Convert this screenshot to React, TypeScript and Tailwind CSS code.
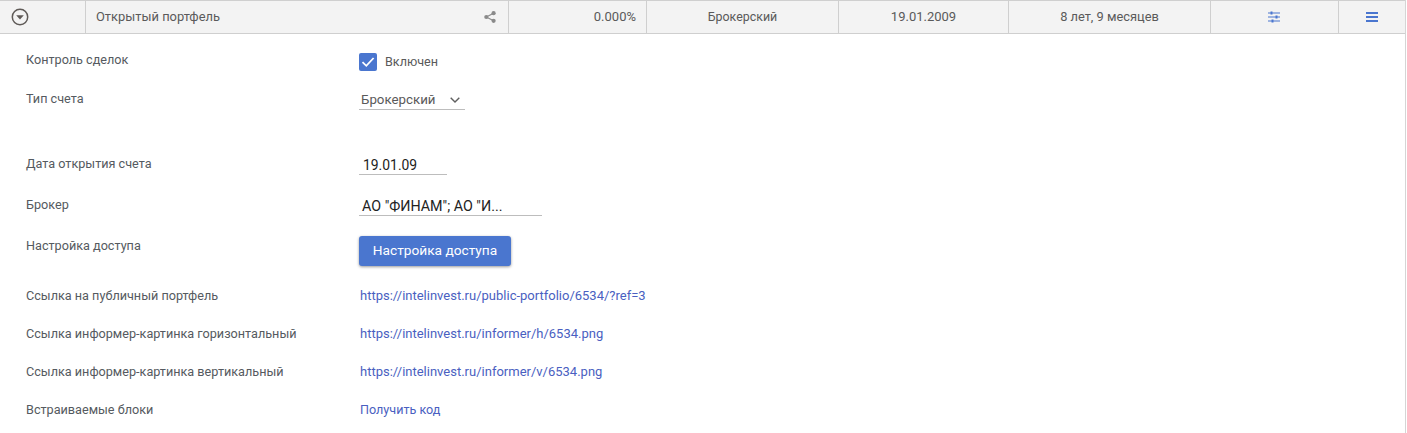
import React from "react";

const cellBase = "flex h-full items-center border-r border-[#cfcfcf] text-[13px] text-[#5a5a5a]";

const Row = ({ label, height, children }: { label: string; height: string; children: React.ReactNode }) => (
  <div className={`flex ${height}`}>
    <div className="w-[333px] pt-[1px] text-[12.65px] leading-[16px] text-[#555a60]">{label}</div>
    <div className="flex-1">{children}</div>
  </div>
);

const LinkText = ({ children, small }: { children: React.ReactNode; small?: boolean }) => (
  <a className={`block pl-[1px] pt-[1px] leading-[16px] text-[#4a5fc1] ${small ? "text-[12.6px]" : "text-[13px]"}`}>{children}</a>
);

export default function App() {
  return (
    <div className="h-[433px] w-[1407px] overflow-hidden bg-white font-['Roboto',sans-serif]">
      <div className="h-[433px] w-[1406px] border-r border-[#d5d5d5]">
        <div className="flex h-[34px] items-stretch border-y border-[#cfcfcf] bg-[#f3f3f3]">
          <div className={`${cellBase} w-[86px] pl-[11px]`}>
            <svg width="18" height="18" viewBox="0 0 18 18">
              <circle cx="9" cy="9" r="7.7" fill="none" stroke="#5f5a57" strokeWidth="1.5" />
              <path d="M5.2 7.3h7.6L9 11.6z" fill="#5f5a57" />
            </svg>
          </div>
          <div className={`${cellBase} w-[423px] justify-between pl-[10px] pr-[12px]`}>
            <span className="-mt-[1px] text-[12.9px]">Открытый портфель</span>
            <svg width="12" height="12" viewBox="0 0 12 12" fill="#8a8a8a">
              <circle cx="9.6" cy="2.2" r="2.1" />
              <circle cx="2.3" cy="6" r="2.1" />
              <circle cx="9.6" cy="9.8" r="2.1" />
              <path d="M2.3 6l7.3-3.8M2.3 6l7.3 3.8" stroke="#8a8a8a" strokeWidth="1.2" />
            </svg>
          </div>
          <div className={`${cellBase} w-[138px] justify-end pr-[10px]`}>0.000%</div>
          <div className={`${cellBase} w-[192px] justify-center`}>
            <span className="text-[12.4px]">Брокерский</span>
          </div>
          <div className={`${cellBase} w-[170px] justify-center`}>19.01.2009</div>
          <div className={`${cellBase} w-[202px] justify-center`}>
            <span className="text-[12.85px]">8 лет, 9 месяцев</span>
          </div>
          <div className={`${cellBase} w-[128px] justify-center pr-[2px]`}>
            <svg width="12" height="12" viewBox="0 0 12 12" fill="#4a76cf">
              <rect x="0" y="1.5" width="12" height="1" />
              <rect x="0" y="5.5" width="12" height="1" />
              <rect x="0" y="9.5" width="12" height="1" />
              <rect x="2.5" y="0.5" width="2" height="3" />
              <rect x="7.5" y="4.5" width="2" height="3" />
              <rect x="3.5" y="8.5" width="2" height="3" />
            </svg>
          </div>
          <div className="flex flex-1 items-center justify-center pr-[1px]">
            <svg width="12" height="10" viewBox="0 0 12 10" fill="#4a76cf">
              <rect y="0" width="12" height="2" />
              <rect y="4" width="12" height="2" />
              <rect y="8" width="12" height="2" />
            </svg>
          </div>
        </div>

        <div className="flex flex-col pl-[26px] pt-[17px]">
          <Row label="Контроль сделок" height="h-[39px]">
            <div className="flex items-center gap-[8px]">
              <span className="flex h-[18px] w-[18px] items-center justify-center rounded-[2px] bg-[#4a76cf]">
                <svg width="16" height="16" viewBox="0 0 16 16" fill="none">
                  <path d="M2.5 8.2l3.8 3.6L13.6 4" stroke="white" strokeWidth="1.8" />
                </svg>
              </span>
              <span className="pt-[1px] text-[12.6px] leading-[20px] text-[#5a5a5a]">Включен</span>
            </div>
          </Row>
          <Row label="Тип счета" height="h-[65px]">
            <div className="flex h-[20px] w-[106px] items-center justify-between border-b border-[#bdbdbd] pl-[2px] pr-[5px] text-[13.3px] text-[#5a5a5a]">
              <span>Брокерский</span>
              <svg width="10" height="6" viewBox="0 0 10 6" fill="none">
                <path d="M0.7 0.7L5 5l4.3-4.3" stroke="#5f5f5f" strokeWidth="1.4" />
              </svg>
            </div>
          </Row>
          <Row label="Дата открытия счета" height="h-[41px]">
            <div className="flex h-[20px] w-[88px] items-center border-b border-[#bdbdbd] pl-[4px] pt-[2px] text-[13.9px] text-[#222]">19.01.09</div>
          </Row>
          <Row label="Брокер" height="h-[41px]">
            <div className="flex h-[20px] w-[183px] items-center border-b border-[#bdbdbd] pl-[3px] pt-[2px] text-[14.3px] text-[#222]">АО "ФИНАМ"; АО "И...</div>
          </Row>
          <Row label="Настройка доступа" height="h-[50px]">
            <button className="-mt-[1px] h-[30px] w-[152px] rounded-[3px] bg-[#4a76cf] pb-[1px] text-[13.7px] text-white shadow-[0_1px_3px_rgba(0,0,0,0.4)]">
              Настройка доступа
            </button>
          </Row>
          <Row label="Ссылка на публичный портфель" height="h-[38px]">
            <LinkText>https://intelinvest.ru/public-portfolio/6534/?ref=3</LinkText>
          </Row>
          <Row label="Ссылка информер-картинка горизонтальный" height="h-[38px]">
            <LinkText>https://intelinvest.ru/informer/h/6534.png</LinkText>
          </Row>
          <Row label="Ссылка информер-картинка вертикальный" height="h-[38px]">
            <LinkText>https://intelinvest.ru/informer/v/6534.png</LinkText>
          </Row>
          <Row label="Встраиваемые блоки" height="h-[24px]">
            <LinkText small>Получить код</LinkText>
          </Row>
        </div>
      </div>
    </div>
  );
}
